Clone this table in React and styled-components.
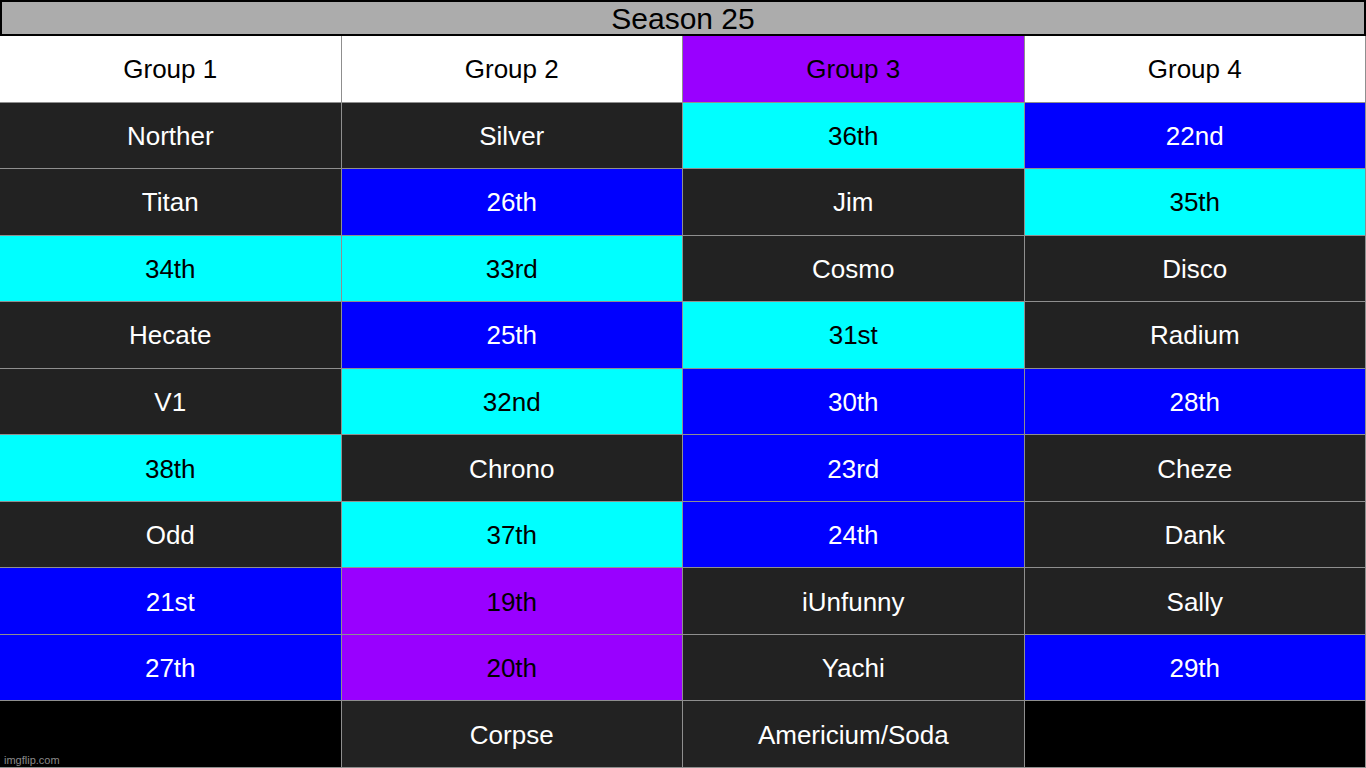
import React from "react";
import styled, { createGlobalStyle } from "styled-components";

const GlobalStyle = createGlobalStyle`
  html, body {
    margin: 0;
    padding: 0;
    background: #000;
  }
  #root {
    width: 1366px;
    height: 768px;
  }
`;

const Page = styled.div`
  position: relative;
  width: 1366px;
  height: 768px;
  display: flex;
  flex-direction: column;
  font-family: "Liberation Sans", Arial, sans-serif;
  overflow: hidden;
`;

const TitleBar = styled.div`
  box-sizing: border-box;
  height: 36px;
  padding-top: 2px;
  border: 2px solid #000;
  background: #acacac;
  color: #000;
  font-size: 30px;
  display: flex;
  align-items: center;
  justify-content: center;
`;

const Grid = styled.div`
  flex: 1;
  display: grid;
  grid-template-columns: repeat(4, 1fr);
  grid-template-rows: repeat(11, 1fr);
`;

const palette = {
  white: { bg: "#ffffff", fg: "#000000" },
  dark: { bg: "#222222", fg: "#ffffff" },
  cyan: { bg: "#00ffff", fg: "#000000" },
  blue: { bg: "#0000ff", fg: "#ffffff" },
  purple: { bg: "#9900ff", fg: "#000000" },
  black: { bg: "#000000", fg: "#ffffff" },
};

const Cell = styled.div`
  box-sizing: border-box;
  display: flex;
  align-items: center;
  justify-content: center;
  padding-top: 2px;
  border-right: 1px solid #8f8f8f;
  border-bottom: 1px solid #8f8f8f;
  background: ${(p) => palette[p.$tone].bg};
  color: ${(p) => palette[p.$tone].fg};
  font-size: 26px;
`;

const Watermark = styled.span`
  position: absolute;
  left: 4px;
  bottom: 2px;
  font-size: 11px;
  color: #8a8a8a;
`;

const rows = [
  [["Group 1", "white"], ["Group 2", "white"], ["Group 3", "purple"], ["Group 4", "white"]],
  [["Norther", "dark"], ["Silver", "dark"], ["36th", "cyan"], ["22nd", "blue"]],
  [["Titan", "dark"], ["26th", "blue"], ["Jim", "dark"], ["35th", "cyan"]],
  [["34th", "cyan"], ["33rd", "cyan"], ["Cosmo", "dark"], ["Disco", "dark"]],
  [["Hecate", "dark"], ["25th", "blue"], ["31st", "cyan"], ["Radium", "dark"]],
  [["V1", "dark"], ["32nd", "cyan"], ["30th", "blue"], ["28th", "blue"]],
  [["38th", "cyan"], ["Chrono", "dark"], ["23rd", "blue"], ["Cheze", "dark"]],
  [["Odd", "dark"], ["37th", "cyan"], ["24th", "blue"], ["Dank", "dark"]],
  [["21st", "blue"], ["19th", "purple"], ["iUnfunny", "dark"], ["Sally", "dark"]],
  [["27th", "blue"], ["20th", "purple"], ["Yachi", "dark"], ["29th", "blue"]],
  [["", "black"], ["Corpse", "dark"], ["Americium/Soda", "dark"], ["", "black"]],
];

export default function App() {
  return (
    <>
      <GlobalStyle />
      <Page>
        <TitleBar>Season 25</TitleBar>
        <Grid>
          {rows.map((row, r) =>
            row.map(([text, tone], c) => (
              <Cell key={`${r}-${c}`} $tone={tone}>
                {text}
              </Cell>
            ))
          )}
        </Grid>
        <Watermark>imgflip.com</Watermark>
      </Page>
    </>
  );
}
